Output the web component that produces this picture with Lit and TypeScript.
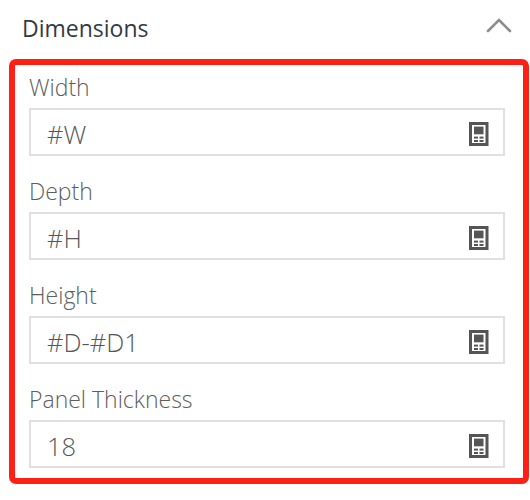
import { LitElement, html, css } from "lit";
import { customElement } from "lit/decorators.js";

const FIELDS = [
  ["Width", "#W"],
  ["Depth", "#H"],
  ["Height", "#D-#D1"],
  ["Panel Thickness", "18"],
];

@customElement("app-root")
export class AppRoot extends LitElement {
  static styles = css`
    :host {
      display: block;
      width: 530px;
      height: 500px;
      background: #fff;
      font-family: "Open Sans", "Noto Sans", sans-serif;
      overflow: hidden;
    }
    .header {
      height: 59px;
      box-sizing: border-box;
      display: flex;
      align-items: flex-start;
      justify-content: space-between;
      padding: 12px 18px 0 22px;
    }
    .title {
      font-size: 23px;
      line-height: 32px;
      font-weight: 500;
      color: #343a44;
    }
    .chev {
      width: 26px;
      height: 16px;
      margin-top: 5px;
    }
    .box {
      box-sizing: border-box;
      margin-left: 9px;
      width: 520px;
      height: 425px;
      border: 6px solid #ff2015;
      border-radius: 7px;
      padding: 8px 18px 0 14px;
      display: flex;
      flex-direction: column;
      gap: 8px;
    }
    .field {
      display: flex;
      flex-direction: column;
      flex: none;
      height: 96px;
    }
    .label {
      height: 35px;
      line-height: 28px;
      font-size: 23px;
      font-weight: 300;
      color: #5c5e60;
    }
    .input {
      box-sizing: border-box;
      height: 48px;
      border: 2px solid #e0e0e0;
      display: flex;
      align-items: center;
      justify-content: space-between;
      padding: 4px 14.5px 0 16px;
      font-size: 25.5px;
      font-weight: 300;
      color: #55575a;
    }
    .calc {
      width: 19.5px;
      height: 24px;
      display: block;
    }
  `;

  render() {
    return html`
      <div class="header">
        <div class="title">Dimensions</div>
        <svg class="chev" viewBox="0 0 26 16">
          <path d="M2 14 L13 3 L24 14" fill="none" stroke="#8a8d91" stroke-width="2.6" stroke-linecap="round" stroke-linejoin="round"></path>
        </svg>
      </div>
      <div class="box">
        ${FIELDS.map(
          ([label, value]) => html`
            <div class="field">
              <div class="label">${label}</div>
              <div class="input">
                <span>${value}</span>
                <svg class="calc" viewBox="0 0 19.5 24">
                  <path fill="#555" fill-rule="evenodd" d="M0 0H19.5V24H0Z M3 3V21H16.5V3Z"></path>
                  <rect x="5" y="4.6" width="9.5" height="7.7" fill="#555"></rect>
                  <rect x="5" y="14.6" width="4" height="2" fill="#555"></rect>
                  <rect x="10.5" y="14.6" width="4" height="2" fill="#555"></rect>
                  <rect x="5" y="18" width="4" height="2" fill="#555"></rect>
                  <rect x="10.5" y="18" width="4" height="2" fill="#555"></rect>
                </svg>
              </div>
            </div>
          `
        )}
      </div>
    `;
  }
}
